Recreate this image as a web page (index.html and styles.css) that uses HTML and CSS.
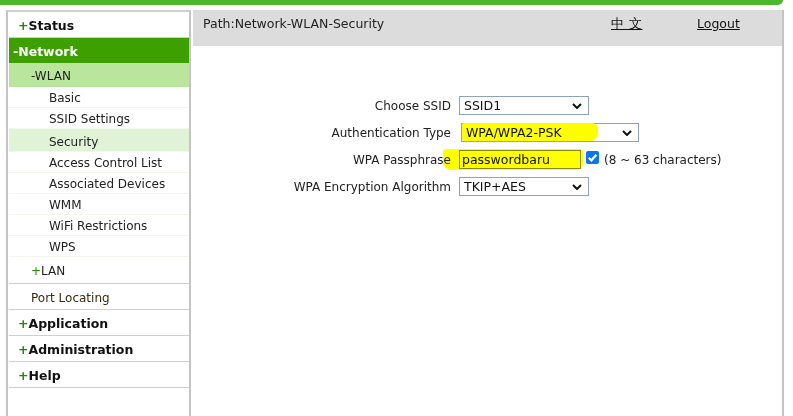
FILE: index.html
```html
<!DOCTYPE html>
<html>
<head>
<meta charset="utf-8">
<link rel="stylesheet" href="styles.css">
</head>
<body>
<div class="topbar"></div>
<div class="main">
  <nav class="sidebar">
    <div class="item top"><span class="plus">+</span>Status</div>
    <div class="item top active">-Network</div>
    <div class="item sub open">-WLAN</div>
    <div class="item leaf">Basic</div>
    <div class="item leaf">SSID Settings</div>
    <div class="item leaf selected">Security</div>
    <div class="item leaf">Access Control List</div>
    <div class="item leaf">Associated Devices</div>
    <div class="item leaf">WMM</div>
    <div class="item leaf">WiFi Restrictions</div>
    <div class="item leaf">WPS</div>
    <div class="item sub"><span class="plus thin">+</span>LAN</div>
    <div class="item sub plain">Port Locating</div>
    <div class="item top"><span class="plus">+</span>Application</div>
    <div class="item top"><span class="plus">+</span>Administration</div>
    <div class="item top"><span class="plus">+</span>Help</div>
  </nav>
  <section class="content">
    <header class="pathbar">
      <span class="path">Path:Network-WLAN-Security</span>
      <a class="lang">中 文</a>
      <a class="logout">Logout</a>
    </header>
    <div class="form">
      <div class="row">
        <label class="lbl">Choose SSID</label>
        <div class="select w130"><span class="val">SSID1</span><svg class="chev" viewBox="0 0 10 6"><path d="M1 1 L5 5 L9 1" /></svg></div>
      </div>
      <div class="row">
        <label class="lbl">Authentication Type</label>
        <div class="select w178"><span class="hl-auth"></span><span class="val">WPA/WPA2-PSK</span><svg class="chev" viewBox="0 0 10 6"><path d="M1 1 L5 5 L9 1" /></svg></div>
      </div>
      <div class="row">
        <label class="lbl">WPA Passphrase</label>
        <div class="passwrap">
          <div class="input">passwordbaru</div>
          <span class="check"><svg viewBox="0 0 12 12"><path d="M2.6 6.2 L5 8.6 L9.6 3.4" /></svg></span>
          <span class="hint">(8 ~ 63 characters)</span>
          <span class="hl-pass"></span>
        </div>
      </div>
      <div class="row">
        <label class="lbl">WPA Encryption Algorithm</label>
        <div class="select w130"><span class="val">TKIP+AES</span><svg class="chev" viewBox="0 0 10 6"><path d="M1 1 L5 5 L9 1" /></svg></div>
      </div>
    </div>
  </section>
</div>
</body>
</html>
```
FILE: styles.css
```css
* { box-sizing: border-box; }
html, body { margin: 0; padding: 0; background: #fff; }
body {
  font-family: Tahoma, "DejaVu Sans", sans-serif;
  font-size: 12px;
  color: #222;
  width: 793px;
  height: 416px;
  overflow: hidden;
}
.topbar {
  width: 783px;
  height: 5px;
  background: #4cb82c;
  border-bottom-right-radius: 6px;
}
.main {
  display: flex;
  margin-top: 5px;
  height: 406px;
}
.sidebar {
  margin-left: 6px;
  width: 185px;
  border-left: 2px solid #c4c4c4;
  border-right: 2px solid #c4c4c4;
  border-top: 2px solid #d0d0d0;
  padding: 0 0 0 1px;
  display: flex;
  flex-direction: column;
}
.item {
  display: flex;
  align-items: center;
  white-space: nowrap;
}
.item.top {
  height: 26px;
  font-weight: bold;
  font-size: 12.5px;
  padding-left: 9px;
  padding-top: 1px;
  border-bottom: 1px solid #cfcfcf;
  color: #111;
}
.item.top.active {
  background: #3e9f00;
  color: #fff;
  padding-left: 4px;
  border-bottom: none;
  height: 25px;
}
.plus { color: #1e8a00; font-weight: bold; }
.plus.thin { font-weight: normal; }
.item.sub {
  height: 24px;
  padding-left: 22px;
  padding-top: 1px;
  color: #222;
}
.item.sub.open {
  background: #b9e59c;
}
.item.sub:not(.open) {
  height: 27px;
  padding-top: 2px;
  border-bottom: 1px solid #cfcfcf;
}
.item.sub.plain {
  height: 26px;
  color: #3a2a10;
}
.item.leaf {
  height: 21px;
  padding-left: 40px;
  padding-top: 1px;
  border-bottom: 1px solid #f2f7ee;
  color: #222;
}
.item.leaf.selected { background: #e1f3d6; height: 23px; padding-top: 3px; }
.content {
  margin-left: 2px;
  width: 591px;
  border-right: 2px solid #c4c4c4;
  display: flex;
  flex-direction: column;
}
.pathbar {
  height: 36px;
  background: #dcdcdc;
  display: flex;
  align-items: flex-start;
  padding-top: 6px;
  padding-left: 10px;
  font-size: 12.5px;
}
.path { width: 408px; color: #222; }
.lang { width: 86px; text-decoration: underline; color: #111; letter-spacing: 0.5px; }
.logout { text-decoration: underline; color: #111; }
.form {
  margin-top: 50px;
  display: flex;
  flex-direction: column;
  gap: 8px;
}
.row {
  display: grid;
  grid-template-columns: 258px auto;
  column-gap: 8px;
  align-items: center;
  height: 19px;
}
.lbl { text-align: right; color: #222; font-size: 12px; }
.select {
  position: relative;
  height: 19px;
  border: 1px solid #8ea3bb;
  background: #fff;
  display: flex;
  align-items: center;
  padding-left: 4px;
  font-size: 12.5px;
  color: #111;
}
.select .val { position: relative; }
.w130 { width: 130px; }
.w178 { width: 178px; margin-left: 2px; }
.chev {
  position: absolute;
  right: 6px;
  top: 6px;
  width: 10px;
  height: 6px;
}
.chev path { fill: none; stroke: #111; stroke-width: 2; }
.select .hl-auth {
  position: absolute;
  left: 0;
  top: -1px;
  width: 136px;
  height: 18px;
  background: #ffff00;
  border-radius: 2px 6px 8px 2px;
}
.passwrap {
  position: relative;
  display: flex;
  align-items: center;
}
.hl-pass {
  position: absolute;
  left: -16px;
  top: -1px;
  width: 140px;
  height: 21px;
  background: #ffff00;
  border-radius: 3px 3px 6px 8px;
  mix-blend-mode: multiply;
}
.input {
  position: relative;
  width: 122px;
  height: 19px;
  border: 1px solid #8a8a50;
  padding-left: 2px;
  display: flex;
  align-items: center;
  font-size: 12.5px;
  color: #111;
}
.check {
  margin-left: 5px;
  width: 13px;
  height: 13px;
  border-radius: 2px;
  background: #0b74f0;
  display: inline-flex;
  margin-top: -4px;
}
.check svg { width: 13px; height: 13px; }
.check path { fill: none; stroke: #fff; stroke-width: 2; }
.hint { margin-left: 5px; font-size: 12px; color: #222; }
```
